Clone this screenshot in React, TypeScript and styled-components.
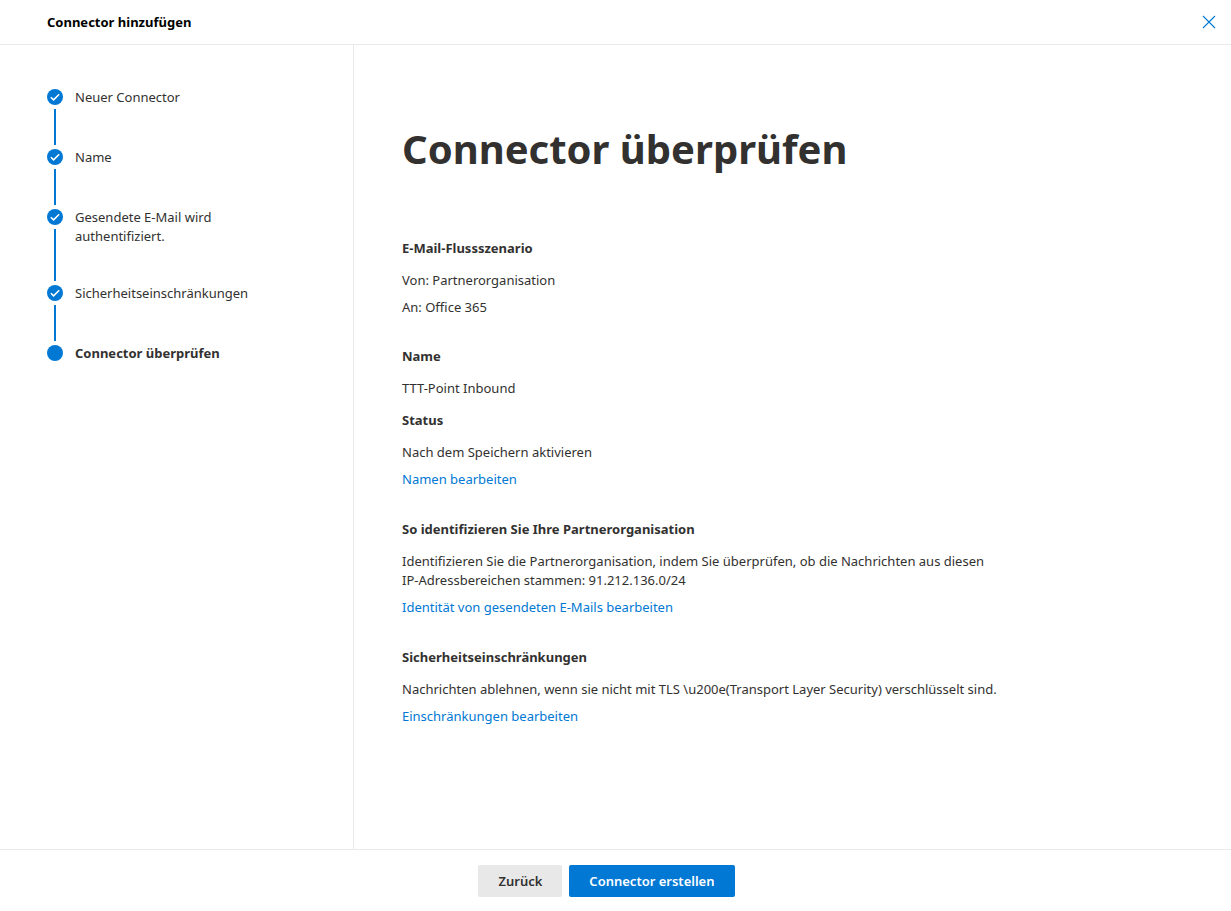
import React from "react";
import styled, { createGlobalStyle } from "styled-components";

const GlobalStyle = createGlobalStyle`
  * { box-sizing: border-box; }
  body {
    margin: 0;
    background: #ffffff;
    color: #323130;
    font-family: "Segoe UI", "Noto Sans", "Open Sans", sans-serif;
    font-size: 13px;
    line-height: 19px;
  }
`;

const Page = styled.div`
  display: flex;
  flex-direction: column;
  min-height: 100vh;
`;

const Header = styled.header`
  display: flex;
  align-items: center;
  justify-content: space-between;
  height: 45px;
  padding: 0 13px 0 47px;
  border-bottom: 1px solid #eaeaea;
`;

const PanelTitle = styled.h2`
  margin: 0;
  font-size: 13px;
  line-height: 20px;
  font-weight: 700;
  color: #000000;
`;

const CloseButton = styled.button`
  display: flex;
  padding: 2px;
  border: 0;
  background: transparent;
  color: #0078d4;
  cursor: pointer;
`;

const Body = styled.div`
  display: flex;
  flex: 1;
`;

const Sidebar = styled.nav`
  flex: 0 0 354px;
  padding: 43px 48px 24px 47px;
  border-right: 1px solid #eaeaea;
`;

const StepList = styled.ol`
  margin: 0;
  padding: 0;
  list-style: none;
`;

const Step = styled.li<{ $current?: boolean }>`
  display: flex;
  gap: 12px;
  min-height: 60px;
  font-weight: ${(p) => (p.$current ? 700 : 400)};
`;

const Rail = styled.div`
  display: flex;
  flex-direction: column;
  align-items: center;
  gap: 4px;
  padding: 1px 0 3px;
`;

const RailLine = styled.span`
  flex: 1;
  width: 2px;
  background: #0078d4;
`;

const StepLabel = styled.span`
  max-width: 180px;
  padding-bottom: 38px;
`;

const Main = styled.main`
  flex: 1;
  padding: 72px 48px 48px;
`;

const Title = styled.h1`
  margin: 0 0 58px;
  font-size: 40px;
  line-height: 64px;
  font-weight: 700;
`;

const Section = styled.section`
  max-width: 600px;
  margin-bottom: 30px;
`;

const Heading = styled.h3`
  margin: 0 0 13px;
  font-size: 13px;
  line-height: 19px;
  font-weight: 700;
`;

const Text = styled.p`
  margin: 0 0 8px;

  &:last-child { margin-bottom: 0; }
  & + ${Heading} { margin-top: 13px; }
`;

const EditLink = styled.a`
  display: block;
  width: fit-content;
  padding-bottom: 1px;
  color: #0078d4;
  text-decoration: none;
`;

const Footer = styled.footer`
  display: flex;
  justify-content: center;
  gap: 7px;
  padding: 15px 18px 14px 0;
  border-top: 1px solid #eaeaea;
`;

const Button = styled.button<{ $primary?: boolean }>`
  height: 32px;
  padding: 0 20px;
  border: 0;
  border-radius: 2px;
  background: ${(p) => (p.$primary ? "#0078d4" : "#e8e8e8")};
  color: ${(p) => (p.$primary ? "#ffffff" : "#323130")};
  font: inherit;
  font-weight: 600;
  cursor: pointer;
`;

const StepMarker = ({ done }: { done: boolean }) => (
  <svg width="16" height="16" viewBox="0 0 16 16" aria-hidden="true">
    <circle cx="8" cy="8" r="8" fill="#0078d4" />
    {done && <path d="M3.9 8.2 6.6 10.9 12.2 5.3" fill="none" stroke="#fff" strokeWidth="1.5" />}
  </svg>
);

const steps = [
  "Neuer Connector",
  "Name",
  "Gesendete E-Mail wird authentifiziert.",
  "Sicherheitseinschränkungen",
  "Connector überprüfen",
];

export default function App() {
  return (
    <Page>
      <GlobalStyle />
      <Header>
        <PanelTitle>Connector hinzufügen</PanelTitle>
        <CloseButton type="button" aria-label="Schließen">
          <svg width="14" height="14" viewBox="0 0 14 14" aria-hidden="true">
            <path d="M1 1 13 13M13 1 1 13" stroke="currentColor" strokeWidth="1.1" />
          </svg>
        </CloseButton>
      </Header>
      <Body>
        <Sidebar aria-label="Schritte">
          <StepList>
            {steps.map((label, i) => {
              const current = i === steps.length - 1;
              return (
                <Step key={label} $current={current} aria-current={current ? "step" : undefined}>
                  <Rail>
                    <StepMarker done={!current} />
                    {!current && <RailLine />}
                  </Rail>
                  <StepLabel>{label}</StepLabel>
                </Step>
              );
            })}
          </StepList>
        </Sidebar>
        <Main>
          <Title>Connector überprüfen</Title>
          <Section>
            <Heading>E-Mail-Flussszenario</Heading>
            <Text>Von: Partnerorganisation</Text>
            <Text>An: Office 365</Text>
          </Section>
          <Section>
            <Heading>Name</Heading>
            <Text>TTT-Point Inbound</Text>
            <Heading>Status</Heading>
            <Text>Nach dem Speichern aktivieren</Text>
            <EditLink href="#name">Namen bearbeiten</EditLink>
          </Section>
          <Section>
            <Heading>So identifizieren Sie Ihre Partnerorganisation</Heading>
            <Text>
              Identifizieren Sie die Partnerorganisation, indem Sie überprüfen, ob die Nachrichten
              aus diesen IP-Adressbereichen stammen: 91.212.136.0/24
            </Text>
            <EditLink href="#identity">Identität von gesendeten E-Mails bearbeiten</EditLink>
          </Section>
          <Section>
            <Heading>Sicherheitseinschränkungen</Heading>
            <Text>
              {"Nachrichten ablehnen, wenn sie nicht mit TLS \\u200e(Transport Layer Security) verschlüsselt sind."}
            </Text>
            <EditLink href="#restrictions">Einschränkungen bearbeiten</EditLink>
          </Section>
        </Main>
      </Body>
      <Footer>
        <Button type="button">Zurück</Button>
        <Button type="button" $primary>Connector erstellen</Button>
      </Footer>
    </Page>
  );
}
